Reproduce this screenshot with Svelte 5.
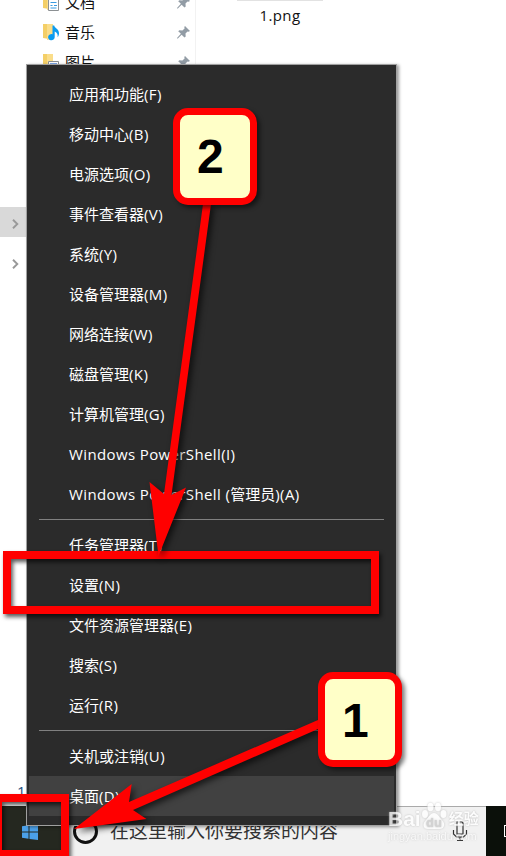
<script lang="ts">
    const groups = [
        [
            "应用和功能(F)", "移动中心(B)", "电源选项(O)", "事件查看器(V)",
            "系统(Y)", "设备管理器(M)", "网络连接(W)", "磁盘管理(K)",
            "计算机管理(G)", "Windows PowerShell(I)", "Windows PowerShell (管理员)(A)"
        ],
        ["任务管理器(T)", "设置(N)", "文件资源管理器(E)", "搜索(S)", "运行(R)"],
        ["关机或注销(U)", "桌面(D)"]
    ];
    const active = "桌面(D)";
    const folders = ["文档", "音乐", "图片"];

    // latin runs are tracked a little wider than the chinese ones
    const runs = (label: string) => label.match(/[\x20-\x7e]+|[^\x20-\x7e]+/g) ?? [];
    const isLatin = (run: string) => run.charCodeAt(0) < 127;
</script>

<div class="screen">
    <main class="explorer">
        <nav class="places">
            {#each folders as name, i}
                <div class="place">
                    <svg class="folder" width="18" height="18" viewBox="0 0 18 18">
                        <path d="M1 1h4l2 1v14l-6-1z" fill="#f4cf67" />
                        <path d="M5 1h6v15l-6 1z" fill="#fadd8a" />
                        {#if i === 0}
                            <path d="M6.500 3.500h10v14h-10z" fill="#fff" stroke="#8c9093" />
                            <path d="M8.500 6.500h2M12 6.500h3M8.500 9.500h6M8.500 12.500h2M12 12.500h3M8.500 15h6" stroke="#399be0" />
                        {:else if i === 1}
                            <path d="M10.500 2.500h1.700c.4 2.500 4.800 3.600 4.800 7.700 0 1.600-.6 3-1.400 4 .4-2.800-.4-4.700-2.900-5.700v5.700a3.300 3.100 0 1 1-2.200-3z" fill="#0a9bf0" />
                        {:else}
                            <path d="M6.500 8.500h10v8h-10z" fill="#fff" stroke="#8c9093" />
                            <path d="M8 10h7v5H8z" fill="#7fa8e8" />
                        {/if}
                    </svg>
                    <span>{name}</span>
                    <svg class="pin" width="13" height="13" viewBox="0 0 13 13">
                        <path d="M8 0l5 5-1.500.8-1-.3-2 2 .2 3-1.200 1L4.600 8.800.6 12.700 0 12.100l3.900-4.300L1.200 5.200l1.200-1 3 .2 2.200-2-.3-1.300z" fill="#929ca5" />
                    </svg>
                </div>
            {/each}
        </nav>
        <section class="files">
            <div class="thumb"></div>
            <span>1.png</span>
        </section>
    </main>

    <div class="tree-row selected">
        <svg width="7" height="10" viewBox="0 0 7 10"><path d="M1 .8L5.300 5 1 9.200" /></svg>
    </div>
    <div class="tree-row second">
        <svg width="7" height="10" viewBox="0 0 7 10"><path d="M1 .8L5.300 5 1 9.200" /></svg>
    </div>
    <span class="count">1</span>

    <footer class="taskbar">
        <div class="start">
            <svg width="16" height="16" viewBox="0 0 16 16">
                <path d="M0 2.200l6.500-.9v6.200H0zM7.500 1.100L16 0v7.500H7.500zM0 8.500h6.500v6.200L0 13.800zM7.500 8.500H16V16l-8.500-1.100z" fill="#4ba0e8" />
            </svg>
        </div>
        <div class="search">
            <span class="cortana"></span>
            <span class="hint">在这里输入你要搜索的内容</span>
            <svg class="mic" width="16" height="21" viewBox="0 0 16 21" fill="none" stroke="#333">
                <path d="M5 1h5l1 1v11H5z" stroke-width="1.200" />
                <path d="M1.500 9v4l3 3h7l3-3V9M8 16v3.500M5 19.500h6" stroke-width="1.200" />
            </svg>
        </div>
        <div class="tasks"><i></i></div>
    </footer>

    <div class="menu">
        {#each groups as group, i}
            {#if i > 0}<hr />{/if}
            {#each group as label}
                <div class="item" class:active={label === active}>
                    {#each runs(label) as run}<span class:latin={isLatin(run)}>{run}</span>{/each}
                </div>
            {/each}
        {/each}
    </div>

    <div class="watermark">
        <div class="brand">
            <b>Bai</b>
            <svg width="26" height="28" viewBox="0 0 26 28">
                <ellipse cx="4" cy="12" rx="3" ry="4" />
                <ellipse cx="9.500" cy="5" rx="3" ry="4.300" />
                <ellipse cx="17" cy="5" rx="3" ry="4.300" />
                <ellipse cx="22.500" cy="12" rx="3" ry="4" />
                <path d="M13 11c4 0 5 4 8 7 4 4 2 9-2 9H7c-5 0-6-5-2-9 3-3 4-7 8-7z" />
                <text x="13" y="24.500">du</text>
            </svg>
            <b class="cn">经验</b>
        </div>
        <small>jingyan.baidu.com</small>
    </div>

    <div class="frame settings"></div>
    <div class="frame start-mark"></div>
    <svg class="arrows" width="506" height="856" viewBox="0 0 506 856">
        <path d="M203 204L164 494 149.500 482 158.500 556 186 487.500 171.500 495 211 204z" />
        <path d="M318 720L129 802 131.700 784 74 829 146.500 819 133 810 318 729z" />
    </svg>
    <div class="callout two">2</div>
    <div class="callout one">1</div>
</div>

<style>
    :global(body) { margin: 0; }

    .screen {
        position: relative;
        width: 506px;
        height: 856px;
        overflow: hidden;
        background: #fff;
        color: #111;
        font: 15px/20px "Open Sans", "Noto Sans CJK SC", sans-serif;
        display: flex;
        flex-direction: column;
        justify-content: space-between;
    }

    .explorer { display: flex; height: 66px; }

    .places {
        box-sizing: border-box;
        width: 196px;
        padding-left: 42px;
        border-right: 1px solid #f2f2f2;
        margin-top: -13px;
    }
    .place {
        display: flex;
        align-items: center;
        height: 30px;
        & span { width: 112px; margin-left: 5px; }
    }
    .files {
        display: flex;
        flex-direction: column;
        align-items: center;
        width: 168px;
        & span { margin-top: 4px; letter-spacing: .4px; }
    }
    .thumb { width: 86px; height: 1px; background: #e2e2e2; }

    .tree-row {
        position: absolute;
        left: 0;
        top: 207px;
        display: flex;
        align-items: center;
        width: 26px;
        height: 30px;
        & svg { margin: 3px 0 0 11.5px; fill: none; stroke: #999; stroke-width: 1.9; }
        &:is(.selected) { background: #d9d9d9; }
        &:is(.second) { top: 247px; }
    }
    .count { position: absolute; left: 17px; top: 781px; color: #1e4f7f; }

    .taskbar { display: flex; height: 50px; }
    .start {
        display: flex;
        width: 61px;
        background: #252820;
        & svg { margin: 18px 0 0 22px; }
    }
    .search {
        box-sizing: border-box;
        display: flex;
        align-items: center;
        width: 425px;
        padding-left: 12px;
        border-top: 1px solid #aaa;
        background: #f1f1f1;
    }
    .cortana { box-sizing: border-box; width: 25px; height: 25px; border: 3px solid #111; border-radius: 50%; }
    .hint { width: 228px; margin: -2px 0 0 12px; font-size: 19px; color: #333; white-space: nowrap; }
    .mic { margin-left: 114px; }
    .tasks {
        width: 20px;
        background: #0b100a;
        overflow: hidden;
        & i { display: block; box-sizing: border-box; width: 14px; height: 12px; margin: 19px 0 0 18px; border: 1px solid #fff; }
    }

    .menu {
        position: absolute;
        left: 26px;
        top: 64px;
        box-sizing: border-box;
        width: 371px;
        height: 762px;
        padding: 9px 2px 0;
        border: 1px solid #a0a0a0;
        background: #2b2b2b;
        color: #fff;
        box-shadow: 2px 1px 3px rgb(0 0 0 / .4);
        & hr { margin: 5px 10px; border: 0; height: 1px; background: #808080; }
    }
    .item {
        display: flex;
        align-items: center;
        height: 40px;
        padding-left: 40px;
        white-space: pre;
        &:is(.active) { background: #414141; }
        & .latin { letter-spacing: .38px; }
    }

    .frame {
        position: absolute;
        box-sizing: border-box;
        border: 8px solid #f00;
        filter: drop-shadow(2px 3px 2px rgb(0 0 0 / .65));
    }
    .settings { left: 3px; top: 551px; width: 376px; height: 63px; }
    .start-mark { left: -6px; top: 794px; width: 75px; height: 64px; }
    .arrows {
        position: absolute;
        inset: 0;
        fill: #f00;
        filter: drop-shadow(3px 3px 3px rgb(0 0 0 / .65));
    }

    .callout {
        position: absolute;
        box-sizing: border-box;
        width: 84px;
        height: 97px;
        border: 7.5px solid #f00;
        border-radius: 15px;
        background: #ffffc8;
        color: #000;
        font: bold 48px/83px "Liberation Sans", sans-serif;
        padding-left: 17px;
        box-shadow: 3px 3px 4px rgb(0 0 0 / .5);
        &:is(.two) { left: 173px; top: 108px; }
        &:is(.one) { left: 318px; top: 672px; height: 95px; }
    }

    .watermark {
        position: absolute;
        left: 388px;
        top: 800px;
        color: #fff;
        font-family: "Liberation Sans", "Noto Sans CJK SC", sans-serif;
        opacity: .8;
        text-shadow: 0 0 2px #aaa;
        & svg { fill: #fff; filter: drop-shadow(0 0 1px #bbb); }
        & text { font: bold 13px "Liberation Sans", sans-serif; fill: #ccc; text-anchor: middle; }
        & small { display: block; font-size: 11px; line-height: 13px; opacity: .75; }
    }
    .brand { display: flex; align-items: end; height: 30px; font-size: 21px; line-height: 22px; }
    .cn { font-size: 15px; margin-left: 2px; }
</style>
